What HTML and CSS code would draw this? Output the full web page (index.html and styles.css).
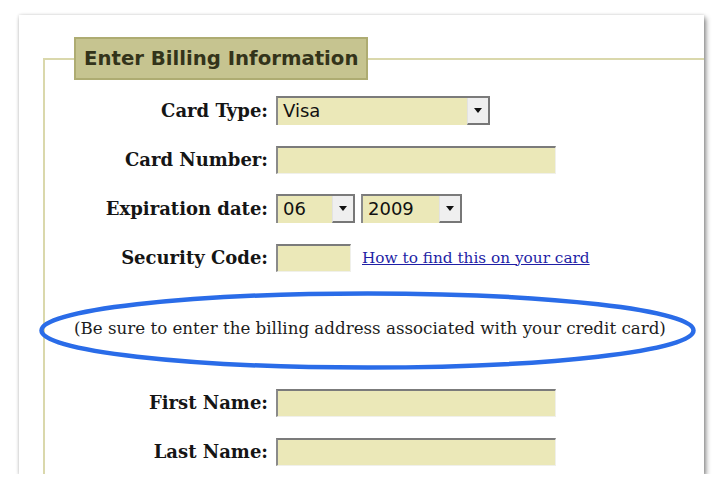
FILE: index.html
```html
<!DOCTYPE html>
<html lang="en">
<head>
    <meta charset="UTF-8">
    <title>Billing Information</title>
    <link rel="stylesheet" href="styles.css">
</head>
<body>
    <div class="shot">
        <fieldset class="billing">
            <legend>Enter Billing Information</legend>
            <div class="rows">
                <div class="row">
                    <label>Card Type:</label>
                    <div class="select card-type">
                        <span class="value">Visa</span>
                        <span class="arrow"></span>
                    </div>
                </div>
                <div class="row">
                    <label>Card Number:</label>
                    <div class="field">
                        <input type="text" class="input number">
                    </div>
                </div>
                <div class="row">
                    <label>Expiration date:</label>
                    <div class="field">
                        <div class="select month">
                            <span class="value">06</span>
                            <span class="arrow"></span>
                        </div>
                        <div class="select year">
                            <span class="value">2009</span>
                            <span class="arrow"></span>
                        </div>
                    </div>
                </div>
                <div class="row">
                    <label>Security Code:</label>
                    <div class="field">
                        <input type="text" class="input code">
                        <a href="#" class="help">How to find this on your card</a>
                    </div>
                </div>
                <p class="note">
                    (Be sure to enter the billing address associated with your credit card)
                    <svg class="ring" width="659" height="81" viewBox="0 0 659 81">
                        <ellipse cx="329.5" cy="40.5" rx="326" ry="37" fill="none" stroke="#2a6ce8" stroke-width="4.5"/>
                    </svg>
                </p>
                <div class="row">
                    <label>First Name:</label>
                    <div class="field">
                        <input type="text" class="input name">
                    </div>
                </div>
                <div class="row">
                    <label>Last Name:</label>
                    <div class="field">
                        <input type="text" class="input name">
                    </div>
                </div>
            </div>
        </fieldset>
    </div>
</body>
</html>
```

FILE: styles.css
```css
body {
    margin: 0;
    background-color: #fff;
    font-family: 'DejaVu Serif', Georgia, serif;
}

.shot {
    width: 685px;
    height: 459px;
    margin: 15px 0 0 19px;
    background-color: #fff;
    overflow: hidden;
    box-shadow: 2px 3px 5px rgba(0, 0, 0, 0.45), 0 0 3px rgba(0, 0, 0, 0.15);
}

.billing {
    width: 700px;
    min-height: 480px;
    margin: 22px 0 0 24px;
    padding: 0;
    border: 2px solid #dad8ac;
    box-sizing: border-box;
}

.billing legend {
    margin-left: 29px;
    padding: 0 8px;
    line-height: 39px;
    background-color: #c6c490;
    border: 2px solid #aeac72;
    color: #33331a;
    font-family: 'DejaVu Sans', Verdana, sans-serif;
    font-weight: bold;
    font-size: 19.7px;
}

.rows {
    display: flex;
    flex-direction: column;
    gap: 20px;
    padding-top: 16px;
}

.row {
    display: grid;
    grid-template-columns: 223px auto;
    column-gap: 8px;
    align-items: center;
    height: 29px;
}

.row label {
    text-align: right;
    font-weight: bold;
    font-size: 18px;
    color: #151515;
}

.field {
    display: flex;
    align-items: center;
    gap: 6px;
}

.input {
    height: 28px;
    margin: 0;
    padding: 0 4px;
    box-sizing: border-box;
    background-color: #ebe8b8;
    border-top: 2px solid #7b7b7b;
    border-left: 2px solid #8a8a8a;
    border-right: 1px solid #f0f0ea;
    border-bottom: 1px solid #f0f0ea;
}

.number,
.name {
    width: 280px;
}

.code {
    width: 75px;
}

.help {
    margin-left: 5px;
    color: #1f1fa6;
    font-size: 15.3px;
}

.select {
    display: flex;
    height: 29px;
    box-sizing: border-box;
    background-color: #ebe8b8;
    border-top: 2px solid #7b7b7b;
    border-left: 2px solid #8a8a8a;
    font-family: 'DejaVu Sans', 'Lucida Grande', sans-serif;
    font-size: 18px;
    color: #111;
}

.select .value {
    flex: 1;
    padding-left: 5px;
    line-height: 26px;
}

.select .arrow {
    position: relative;
    width: 20px;
    background-color: #efefef;
    border-right: 2px solid #777;
    border-bottom: 2px solid #777;
    border-left: 1px solid #e2e2e2;
}

.select .arrow::after {
    content: "";
    position: absolute;
    left: 6px;
    top: 10px;
    border-left: 4px solid transparent;
    border-right: 4px solid transparent;
    border-top: 5px solid #111;
}

.card-type {
    width: 214px;
}

.month {
    width: 79px;
}

.year {
    width: 101px;
}

.note {
    position: relative;
    margin: 22px 0 26px;
    padding-left: 29px;
    line-height: 28px;
    font-size: 16.7px;
    color: #1d1d1d;
}

.ring {
    position: absolute;
    left: -7px;
    top: -24px;
}
```
